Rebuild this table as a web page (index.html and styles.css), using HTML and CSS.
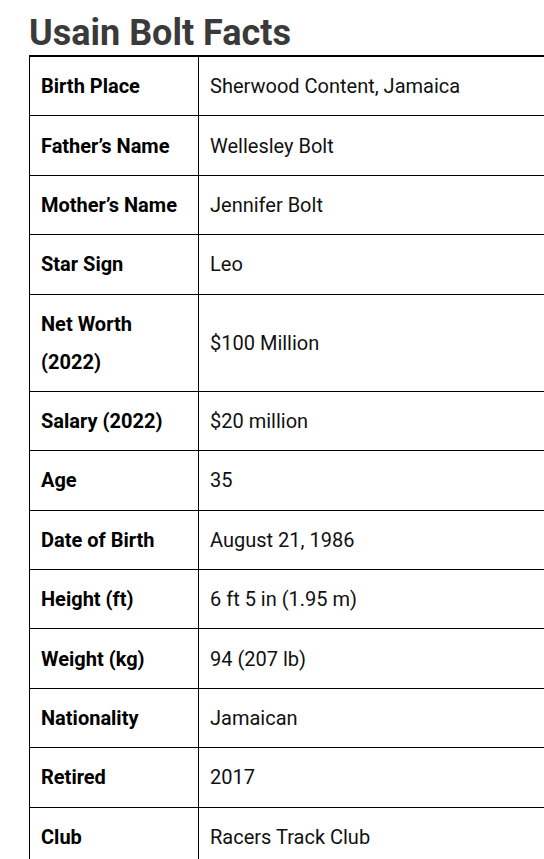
FILE: index.html
```html
<!DOCTYPE html>
<html>
<head>
<meta charset="utf-8">
<link rel="stylesheet" href="styles.css">
</head>
<body>
<h1 class="title">Usain Bolt Facts</h1>
<div class="table-wrap">
<table class="facts">
  <tbody>
    <tr><td class="label">Birth Place</td><td class="value">Sherwood Content, Jamaica</td></tr>
    <tr><td class="label">Father’s Name</td><td class="value">Wellesley Bolt</td></tr>
    <tr><td class="label">Mother’s Name</td><td class="value">Jennifer Bolt</td></tr>
    <tr><td class="label">Star Sign</td><td class="value">Leo</td></tr>
    <tr><td class="label">Net Worth<br>(2022)</td><td class="value">$100 Million</td></tr>
    <tr><td class="label">Salary (2022)</td><td class="value">$20 million</td></tr>
    <tr><td class="label">Age</td><td class="value">35</td></tr>
    <tr><td class="label">Date of Birth</td><td class="value">August 21, 1986</td></tr>
    <tr><td class="label">Height (ft)</td><td class="value">6 ft 5 in (1.95 m)</td></tr>
    <tr><td class="label">Weight (kg)</td><td class="value">94 (207 lb)</td></tr>
    <tr><td class="label">Nationality</td><td class="value">Jamaican</td></tr>
    <tr><td class="label">Retired</td><td class="value">2017</td></tr>
    <tr><td class="label">Club</td><td class="value">Racers Track Club</td></tr>
  </tbody>
</table>
</div>
</body>
</html>
```
FILE: styles.css
```css
html, body {
  margin: 0;
  padding: 0;
  background: #fff;
  overflow: hidden;
}
body {
  font-family: Roboto, "Liberation Sans", sans-serif;
  width: 544px;
}
.title {
  font-family: Roboto, "Liberation Sans", sans-serif;
  font-weight: 700;
  font-size: 36px;
  line-height: 42px;
  color: #3a3a3a;
  margin: 12px 0 1px 29px;
}
.table-wrap {
  margin-left: 29px;
  width: 515px;
  overflow: hidden;
}
.facts {
  border-collapse: collapse;
  width: 530px;
  border-top: 2px solid #000;
  font-size: 20px;
  line-height: 38px;
}
.facts td {
  border: 1px solid #000;
  padding: 10.2px 11px;
  vertical-align: middle;
  text-align: left;
}
.facts .label {
  width: 146px;
  font-weight: 700;
  color: #000;
}
.facts .value {
  color: #111;
}
```
